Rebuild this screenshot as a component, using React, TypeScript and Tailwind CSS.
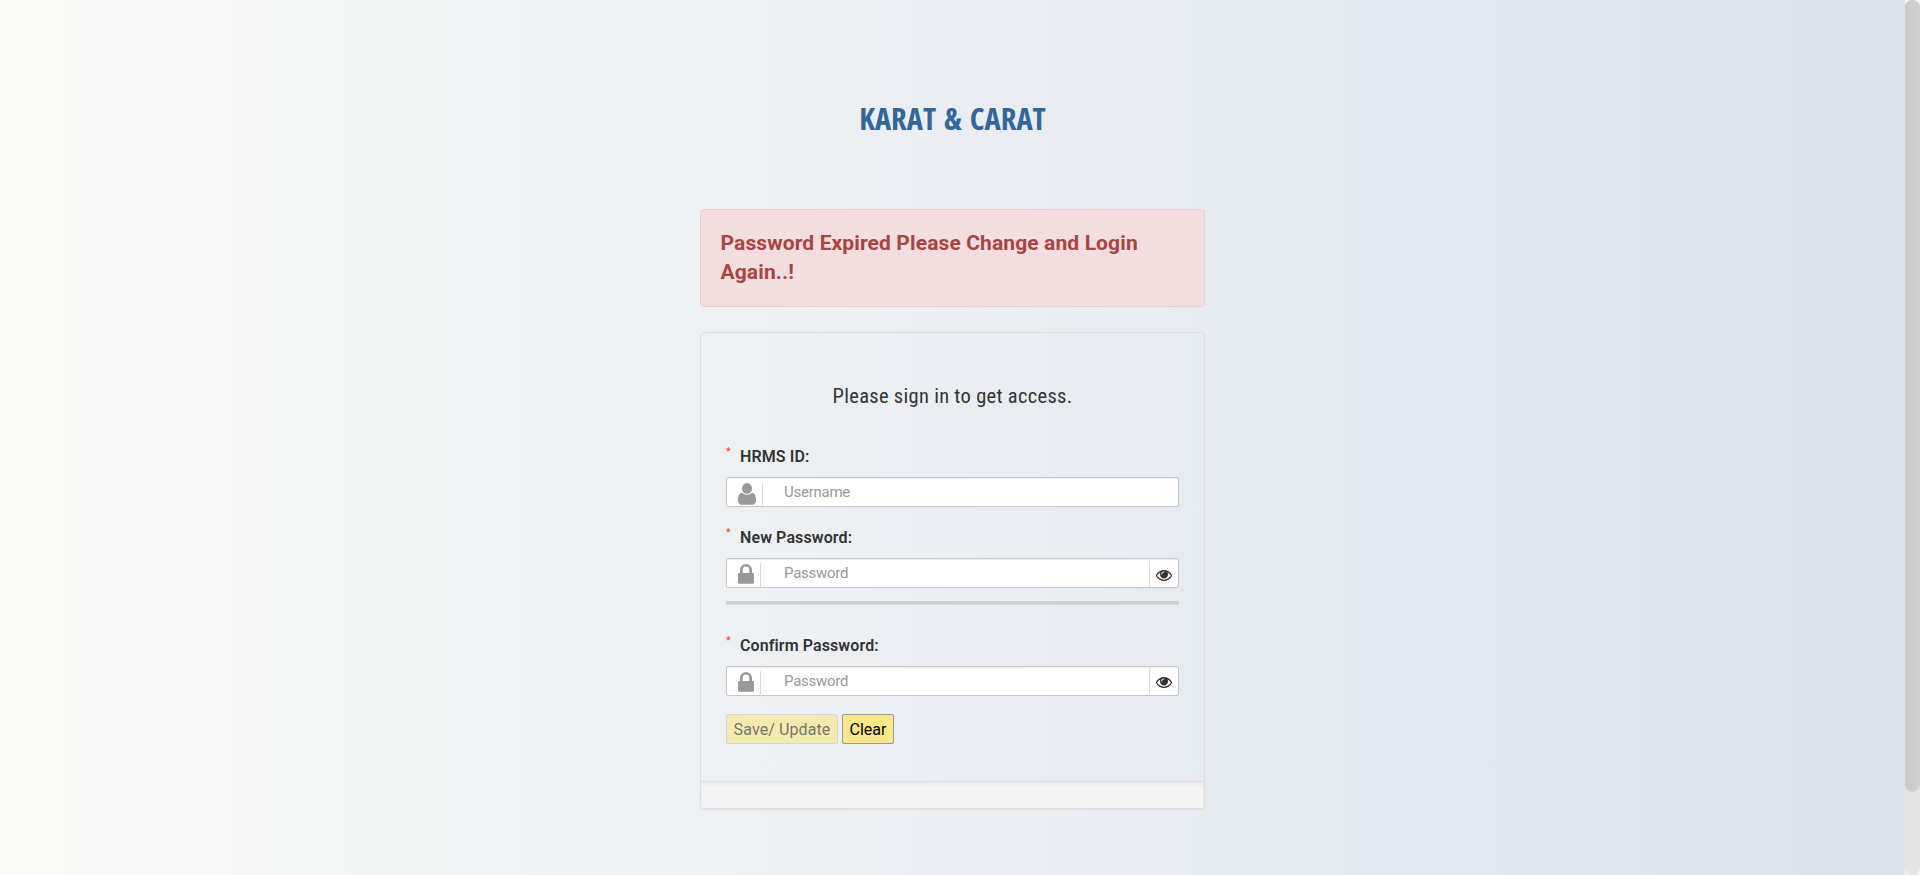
import React from "react";

function UserIcon() {
  return (
    <svg className="block h-[22px] w-[18px]" viewBox="0 0 18 22" fill="#999">
      <ellipse cx="9" cy="5.4" rx="5.1" ry="5.3" />
      <path d="M4 9.8C1.2 10.2 0 13 0 17.2C0 20 1.5 21.8 3.8 21.8H14.2C16.5 21.8 18 20 18 17.2C18 13 16.8 10.2 14 9.8C12.7 11.1 11 11.8 9 11.8S5.300 11.100 4 9.800Z" />
    </svg>
  );
}

function LockIcon() {
  return (
    <svg className="block h-[20px] w-[16px]" viewBox="0 0 16 20" fill="#999">
      <path d="M4.700 9V6A3.300 3.400 0 0 1 11.300 6V9ZM2 9H1.200A1.200 1.200 0 0 0 0 10.200V18.600A1.200 1.200 0 0 0 1.200 19.800H14.800A1.200 1.200 0 0 0 16 18.600V10.200A1.200 1.200 0 0 0 14.800 9H14V6A6 6 0 0 0 2 6Z" fillRule="evenodd" />
    </svg>
  );
}

function EyeIcon() {
  return (
    <svg className="block h-[11px] w-[16px]" viewBox="0 128 1792 1152" preserveAspectRatio="none" fill="#333">
      <path d="M1664 704q-152-236-381-353 61 104 61 225 0 185-131.500 316.500t-316.500 131.500-316.500-131.500-131.500-316.500q0-121 61-225-229 117-381 353 133 205 333.500 326.500t434.500 121.500 434.500-121.500 333.500-326.500zm-720-384q0-20-14-34t-34-14q-125 0-214.500 89.500t-89.500 214.500q0 20 14 34t34 14 34-14 14-34q0-86 61-147t147-61q20 0 34-14t14-34zm848 384q0 34-20 69-140 230-376.500 368.500t-499.500 138.500-499.500-139-376.500-368q-20-35-20-69t20-69q140-229 376.500-368t499.500-139 499.500 139 376.500 368q20 35 20 69z" />
    </svg>
  );
}

type FieldProps = {
  label: string;
  placeholder: string;
  type: string;
  icon: "user" | "lock";
  toggleClass?: string;
};

function Field({ label, placeholder, type, icon, toggleClass = "top-[3px]" }: FieldProps) {
  return (
    <div>
      <label className="flex h-[34px] pt-[2px] text-[16px] leading-[24px] font-semibold tracking-[0.1px] text-[#333]">
        <span className="-mt-[3px] w-[14px] text-[11px] font-normal leading-[20px] text-[#ff3b30]">*</span>
        {label}
      </label>
      <div className="relative h-[30px]">
        <input
          type={type}
          placeholder={placeholder}
          className="block h-[30px] w-full rounded-[2px] border border-[#c6c6c6] bg-white pb-px pl-[57px] text-[15px] tracking-[-0.25px] text-[#555] shadow-[inset_0_1px_1px_rgba(0,0,0,0.075)] outline-none placeholder:text-[#999]"
        />
        <span className={icon === "user" ? "absolute top-[6px] left-[11.5px] w-[25.5px] border-r border-[#ddd] pb-[3px]" : "absolute top-[5px] left-[12px] w-[23px] border-r border-[#ddd] pt-px pb-[5px]"}>
          {icon === "user" ? <UserIcon /> : <LockIcon />}
        </span>
        {icon === "lock" && (
          <button type="button" className={`absolute right-0 flex h-[29px] w-[30px] items-center border-l border-[#ddd] pl-[6px] ${toggleClass}`}>
            <EyeIcon />
          </button>
        )}
      </div>
    </div>
  );
}

export default function App() {
  return (
    <div className="flex h-[875px] w-full overflow-hidden font-[Roboto,sans-serif] text-[#333]">
      <main className="flex flex-1 flex-col items-center bg-[linear-gradient(to_right,#fafaf8,#dae2ed)]">
        <h1 className="mt-[96px] h-[113px] font-['Open_Sans',sans-serif] text-[30.7px] leading-[45px] font-bold text-[#336699] [font-stretch:75%] [word-spacing:2.5px]">
          KARAT &amp; CARAT
        </h1>
        <div className="h-[98px] w-[505px] rounded-[4px] border border-[#ebccd1] bg-[#f2dede] pt-[19px] pr-[35px] pl-[19.5px] text-[21px] leading-[29px] font-bold tracking-[0.12px] text-[#a94442]">
          Password Expired Please Change and Login Again..!
        </div>
        <section className="mt-[25px] flex h-[477px] w-[505px] flex-col rounded-[4px] border border-[#dddddd] shadow-[0_1px_1px_rgba(0,0,0,0.05)]">
          <div className="flex-1 px-[25px] pt-[48px]">
            <h2 className="h-[62px] text-center text-[20.5px] leading-[30px] font-normal tracking-[0.3px] [font-stretch:75%]">
              Please sign in to get access.
            </h2>
            <Field label="HRMS ID:" placeholder="Username" type="text" icon="user" />
            <div className="mt-[17px]">
              <Field label="New Password:" placeholder="Password" type="password" icon="lock" />
            </div>
            <div className="mt-[13px] h-[4px] border-b border-[#d8dadc] bg-[#cfcfcf]" />
            <div className="mt-[27px]">
              <Field label="Confirm Password:" placeholder="Password" type="password" icon="lock" toggleClass="top-[2px]" />
            </div>
            <div className="mt-[18px] flex gap-[4px] text-[16px] leading-[28px]">
              <button disabled className="h-[30px] w-[112px] rounded-[2px] border border-[#d3d5d7] bg-[#f4e9af] pt-px tracking-[0.1px] text-[#76756a]">
                Save/ Update
              </button>
              <button className="h-[30px] w-[52px] rounded-[2px] border border-[#999] bg-[#fae78a] pt-px text-black">Clear</button>
            </div>
          </div>
          <footer className="h-[27px] rounded-b-[3px] border-t border-[#dddddd] bg-[#f5f5f5] shadow-[inset_0_2px_4px_rgba(0,0,0,0.06)]" />
        </section>
      </main>
      <aside className="h-full w-[15px] bg-[#f4f4f4]">
        <div className="h-full rounded-[8px] bg-[#e4e4e4]">
          <div className="h-[792px] rounded-[8px] bg-gradient-to-r from-[#c9c9c9] to-[#d2d2d2]" />
        </div>
      </aside>
    </div>
  );
}
